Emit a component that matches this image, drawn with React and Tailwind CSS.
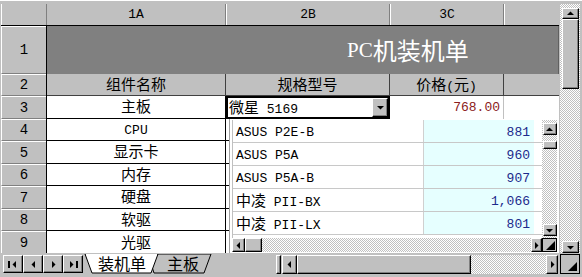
import React from 'react';

const CJK = /([\u3000-\u9fff\uff00-\uffef]+)/;

// SimSun-like mix: CJK runs a bit larger than the mono latin runs
const Mix = ({ text, cjk = 'text-[15px]', latin = 'text-[13px]' }) => (
    <span className="whitespace-pre">
        {text.split(CJK).filter(Boolean).map((part, i) =>
            CJK.test(part)
                ? <span key={i} className={`${cjk} font-['Noto_Sans_CJK_SC',sans-serif]`}>{part}</span>
                : <span key={i} className={latin}>{part}</span>
        )}
    </span>
);

const raised = "bg-[#c0c0c0] border border-t-white border-l-white border-r-black border-b-black shadow-[inset_-1px_-1px_0_#808080]";
const checker = "bg-[conic-gradient(#ffffff_25%,#c0c0c0_0_50%,#ffffff_0_75%,#c0c0c0_0)] bg-[length:2px_2px]";

const Tri = ({ dir = 'up', size = 7 }) => {
    const pts = {
        up: "0,5 3.5,1.5 7,5",
        down: "0,2 3.5,5.5 7,2",
        left: "5,0 1.5,3.5 5,7",
        right: "2,0 5.5,3.5 2,7",
    }[dir];
    return (
        <svg width={size} height={size} viewBox="0 0 7 7">
            <polygon points={pts} fill="#000" />
        </svg>
    );
};

const Grip = () => (
    <svg width="9" height="9" viewBox="0 0 9 9">
        <polygon points="9,0 9,9 0,9" fill="#000" />
    </svg>
);

const ArrowBtn = ({ dir, className = '' }) => (
    <div className={`${raised} flex items-center justify-center ${className}`}>
        <Tri dir={dir} />
    </div>
);

const RowHead = ({ n, h }) => (
    <div className={`w-[46px] ${h} flex shrink-0`}>
        <div className="w-[45px] h-full bg-[#c0c0c0] border-t border-l border-t-white border-l-white border-b border-b-[#808080] flex items-center justify-center text-[14px]">
            {n}
        </div>
        <div className="w-px h-full bg-black" />
    </div>
);

const parts = [
    { no: 4, name: 'CPU', h: 'h-[22px]' },
    { no: 5, name: '显示卡', h: 'h-[23px]' },
    { no: 6, name: '内存', h: 'h-[22px]' },
    { no: 7, name: '硬盘', h: 'h-[23px]' },
    { no: 8, name: '软驱', h: 'h-[22px]' },
    { no: 9, name: '光驱', h: 'h-[24px]' },
];

const boards = [
    { model: 'ASUS P2E-B', price: '881' },
    { model: 'ASUS P5A', price: '960' },
    { model: 'ASUS P5A-B', price: '907' },
    { model: '中凌 PII-BX', price: '1,066' },
    { model: '中凌 PII-LX', price: '801' },
];

const App = () => {
    return (
        <div className="w-[582px] h-[277px] bg-[#c0c0c0] overflow-hidden flex flex-col font-['Liberation_Mono','Noto_Sans_CJK_SC',monospace] text-black leading-none">
            <div className="flex h-[253px] pt-[3px] pl-px border-t border-t-white">
                {/* sheet */}
                <div className="w-[558px] flex flex-col overflow-hidden">
                    {/* column headers */}
                    <div className="flex h-[22px] border-b border-black shrink-0">
                        <div className="w-[46px] h-full border-l border-white border-r border-r-[#808080]" />
                        <div className="w-[179px] h-full flex items-center justify-center text-[13px] border-r border-[#808080]">1A</div>
                        <div className="w-[164px] h-full flex items-center justify-center text-[13px] border-l border-white border-r border-r-[#808080]">2B</div>
                        <div className="w-[114px] h-full flex items-center justify-center text-[13px] border-l border-white border-r border-r-[#808080]">3C</div>
                        <div className="flex-1 h-full border-l border-white" />
                    </div>

                    {/* row 1: title */}
                    <div className="flex h-[48px] shrink-0">
                        <RowHead n="1" h="h-[48px]" />
                        <div className="flex-1 h-full bg-[#808080] flex items-center pl-[300px] text-white border-r border-[#606060]">
                            <span className="text-[21px] font-['Liberation_Serif',serif]">PC</span>
                            <span className="text-[24px] font-['Noto_Sans_CJK_SC',sans-serif]">机装机单</span>
                        </div>
                    </div>

                    {/* row 2: headings */}
                    <div className="flex h-[22px] shrink-0">
                        <RowHead n="2" h="h-[22px]" />
                        <div className="w-[179px] h-full flex items-center justify-center border-r border-b border-[#404040]"><Mix text="组件名称" /></div>
                        <div className="w-[164px] h-full flex items-center justify-center border-r border-b border-[#404040]"><Mix text="规格型号" /></div>
                        <div className="w-[114px] h-full flex items-center justify-center border-r border-b border-[#404040]"><Mix text="价格(元)" /></div>
                        <div className="flex-1 h-full border-b border-[#404040]" />
                    </div>

                    {/* row 3: selected board */}
                    <div className="flex h-[23px] shrink-0">
                        <RowHead n="3" h="h-[23px]" />
                        <div className="w-[179px] h-full bg-white flex items-center justify-center border-r border-b border-black"><Mix text="主板" /></div>
                        <div className="w-[164px] h-full flex border-2 border-black bg-white">
                            <div className="flex-1 flex items-center pl-[1px] pt-px"><Mix text="微星 5169" /></div>
                            <ArrowBtn dir="down" className="w-[16px] h-full" />
                        </div>
                        <div className="w-[114px] h-full bg-white flex items-center justify-end pr-[3px] text-[13px] text-[#8b2020] border-r border-[#c0c0c0]">768.00</div>
                        <div className="flex-1 h-full bg-white" />
                    </div>

                    {/* rows 4-9 with dropdown list */}
                    <div className="flex flex-1 min-h-0">
                        <div className="flex flex-col w-[228px]">
                            {parts.map(p => (
                                <div key={p.no} className={`flex ${p.h} shrink-0`}>
                                    <RowHead n={p.no} h={p.h} />
                                    <div className="w-[179px] h-full bg-white flex items-center justify-center border-r border-b border-black"><Mix text={p.name} /></div>
                                    <div className="flex-1 h-full bg-white border-b border-black" />
                                </div>
                            ))}
                        </div>
                        <div className="flex-1 flex flex-col bg-white border-l border-[#a0a0a0] pt-px pl-[2px] pr-[2px]">
                            <div className="flex flex-1 min-h-0">
                                <div className="flex-1 flex flex-col border-l border-[#c0c0c0]">
                                    {boards.map(b => (
                                        <div key={b.model} className="flex h-[23px] shrink-0 border-b border-[#c8c8c8]">
                                            <div className="w-[190px] flex items-center pl-[3px] pt-[2px]"><Mix text={b.model} /></div>
                                            <div className="w-[111px] bg-[#e6ffff] border-l border-[#d0d0d0] flex items-center justify-end pr-[4px] pt-[2px] text-[13px] text-[#1c2a8c]">{b.price}</div>
                                            <div className="flex-1" />
                                        </div>
                                    ))}
                                </div>
                                <div className={`w-[15px] flex flex-col items-center pt-[3px] pb-[2px] ${checker}`}>
                                    <ArrowBtn dir="up" className="w-[14px] h-[12px]" />
                                    <div className={`${raised} w-[14px] h-[8px] mt-[6px]`} />
                                    <div className="flex-1" />
                                    <ArrowBtn dir="down" className="w-[14px] h-[12px]" />
                                </div>
                            </div>
                            <div className="flex h-[14px] shrink-0 mb-px">
                                <ArrowBtn dir="left" className="w-[13px] h-full" />
                                <div className={`${raised} w-[17px] h-full`} />
                                <div className={`flex-1 h-full ${checker}`} />
                                <ArrowBtn dir="right" className="w-[11px] h-full" />
                                <div className="w-[15px] h-full border border-black bg-[#c0c0c0] flex items-end justify-end p-px"><Grip /></div>
                            </div>
                        </div>
                    </div>
                </div>

                {/* outer vertical scrollbar */}
                <div className={`w-[20px] flex flex-col items-center pt-[4px] ml-px ${checker}`}>
                    <ArrowBtn dir="up" className="w-[17px] h-[11px]" />
                    <div className={`${raised} w-[17px] h-[70px]`} />
                    <div className="flex-1" />
                    <ArrowBtn dir="down" className="w-[17px] h-[12px]" />
                </div>
                <div className="flex-1" />
            </div>

            {/* sheet tabs + horizontal scrollbar */}
            <div className="flex h-[24px] items-start pt-px">
                <div className="flex pl-[3px] pt-px">
                    <div className={`${raised} w-[20px] h-[18px] flex items-center justify-center gap-px`}>
                        <div className="w-[2px] h-[7px] bg-black" /><Tri dir="left" />
                    </div>
                    <ArrowBtn dir="left" className="w-[20px] h-[18px]" />
                    <ArrowBtn dir="right" className="w-[20px] h-[18px]" />
                    <div className={`${raised} w-[20px] h-[18px] flex items-center justify-center gap-px`}>
                        <Tri dir="right" /><div className="w-[2px] h-[7px] bg-black" />
                    </div>
                </div>
                <div className="relative w-[130px] h-[20px] ml-[1px]">
                    <svg className="absolute inset-0" width="130" height="20" viewBox="0 0 130 20">
                        <polygon points="64,0 127,0 120,19 70,19" fill="#c0c0c0" stroke="#000" strokeWidth="1" />
                        <polygon points="1,0 74,0 67,19 8,19" fill="#ffffff" stroke="#000" strokeWidth="1" />
                        <line x1="2" y1="0" x2="73" y2="0" stroke="#ffffff" strokeWidth="2" />
                    </svg>
                    <div className="relative flex h-full items-center">
                        <div className="w-[74px] flex justify-center pl-[2px]"><Mix text="装机单" cjk="text-[16px]" /></div>
                        <div className="w-[50px] flex justify-center"><Mix text="主板" cjk="text-[16px]" /></div>
                    </div>
                </div>
                <div className="w-[62px]" />
                <div className={`${raised} w-[5px] h-[19px] mt-px`} />
                <div className="flex h-[19px] w-[276px] mt-px ml-[1px]">
                    <ArrowBtn dir="left" className="w-[15px] h-full" />
                    <div className={`${raised} w-[174px] h-full`} />
                    <div className={`flex-1 h-full ${checker}`} />
                    <ArrowBtn dir="right" className="w-[12px] h-full" />
                </div>
                <div className="w-[20px] h-[20px] ml-[2px] border border-black bg-[#c0c0c0] flex items-end justify-end p-[2px]"><Grip /></div>
            </div>
        </div>
    );
};

export default App;
